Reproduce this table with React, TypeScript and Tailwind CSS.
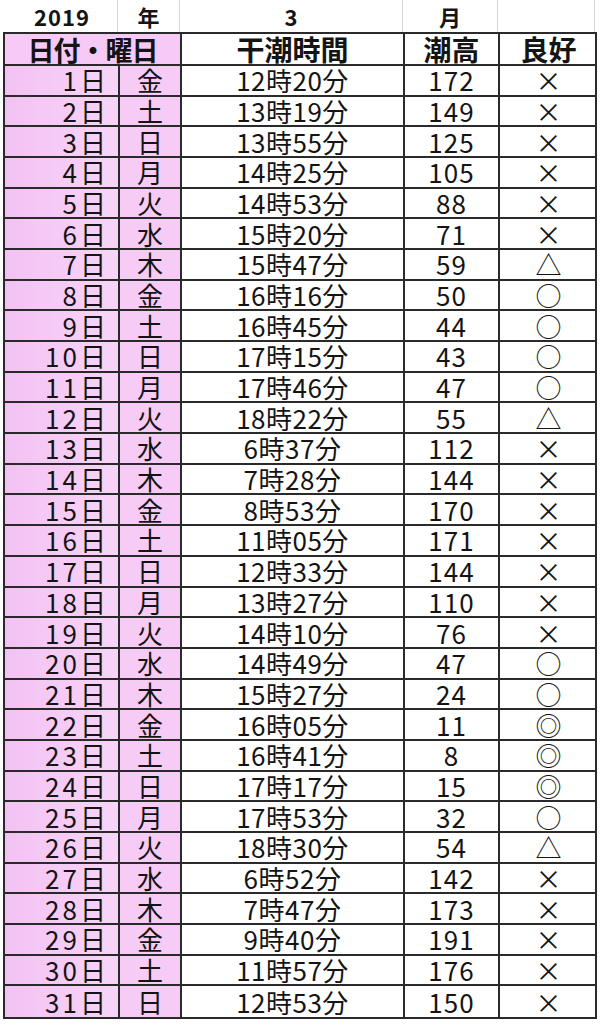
import React from "react";

type Mark = "×" | "△" | "○" | "◎";

interface Tide {
  day: number;
  wd: string;
  time: string;
  height: number;
  mark: Mark;
}

const rows: [string, string, number, Mark][] = [
  ["金", "12時20分", 172, "×"],
  ["土", "13時19分", 149, "×"],
  ["日", "13時55分", 125, "×"],
  ["月", "14時25分", 105, "×"],
  ["火", "14時53分", 88, "×"],
  ["水", "15時20分", 71, "×"],
  ["木", "15時47分", 59, "△"],
  ["金", "16時16分", 50, "○"],
  ["土", "16時45分", 44, "○"],
  ["日", "17時15分", 43, "○"],
  ["月", "17時46分", 47, "○"],
  ["火", "18時22分", 55, "△"],
  ["水", "6時37分", 112, "×"],
  ["木", "7時28分", 144, "×"],
  ["金", "8時53分", 170, "×"],
  ["土", "11時05分", 171, "×"],
  ["日", "12時33分", 144, "×"],
  ["月", "13時27分", 110, "×"],
  ["火", "14時10分", 76, "×"],
  ["水", "14時49分", 47, "○"],
  ["木", "15時27分", 24, "○"],
  ["金", "16時05分", 11, "◎"],
  ["土", "16時41分", 8, "◎"],
  ["日", "17時17分", 15, "◎"],
  ["月", "17時53分", 32, "○"],
  ["火", "18時30分", 54, "△"],
  ["水", "6時52分", 142, "×"],
  ["木", "7時47分", 173, "×"],
  ["金", "9時40分", 191, "×"],
  ["土", "11時57分", 176, "×"],
  ["日", "12時53分", 150, "×"],
];

const tides: Tide[] = rows.map(([wd, time, height, mark], i) => ({
  day: i + 1,
  wd,
  time,
  height,
  mark,
}));

const font = {
  fontFamily: '"Noto Sans CJK JP", "Noto Sans", sans-serif',
};

const cols = "grid-cols-[115px_62px_223px_95px_97px]";

export default function App() {
  return (
    <div className="w-[604px] h-[1024px] bg-white text-[#141414] overflow-hidden" style={font}>
      <div className="ml-[3px] w-[596px]">
        {/* year / month row, plain sheet gridlines */}
        <div className={`grid ${cols} h-[32px] text-[22px] font-bold leading-none`}>
          <div className="flex items-center justify-center border-r border-[#d6d6d6] pl-1 tracking-[1px]">2019</div>
          <div className="flex items-center justify-center border-r border-[#d6d6d6]">年</div>
          <div className="flex items-center justify-center border-r border-[#d6d6d6]">3</div>
          <div className="flex items-center justify-center border-r border-[#d6d6d6]">月</div>
          <div className="border-r border-[#d6d6d6]" />
        </div>

        <div
          className={`grid ${cols} grid-rows-[32px_repeat(31,1fr)] h-[987px] w-[594px] border-2 border-[#2a2a2a] box-border`}
        >
          <div className="col-span-2 flex items-center justify-center bg-[#f6c9f6] border-r-2 border-b-2 border-[#2a2a2a] text-[27px] font-bold leading-none tracking-[-1px]">
            日付・曜日
          </div>
          <div className="flex items-center justify-center border-r-2 border-b-2 border-[#2a2a2a] text-[28px] font-bold leading-none">
            干潮時間
          </div>
          <div className="flex items-center justify-center border-r-2 border-b-2 border-[#2a2a2a] text-[28px] font-bold leading-none">
            潮高
          </div>
          <div className="flex items-center justify-center border-b-2 border-[#2a2a2a] text-[28px] font-bold leading-none">
            良好
          </div>

          {tides.map((t, i) => {
            const last = i === tides.length - 1;
            const b = last ? "" : "border-b-2";
            return (
              <React.Fragment key={t.day}>
                <div
                  className={`flex items-center justify-end pr-[12px] bg-gradient-to-r from-[#f3c2f3] to-[#f8d4f8] border-r-2 border-[#2a2a2a] ${b} text-[26px] leading-none`}
                >
                  <span className="tracking-[3px]">{t.day}</span>
                  <span>日</span>
                </div>
                <div
                  className={`flex items-center justify-center bg-[#f6cbf6] border-r-2 border-[#2a2a2a] ${b} text-[26px] leading-none`}
                >
                  {t.wd}
                </div>
                <div
                  className={`flex items-center justify-center border-r-2 border-[#2a2a2a] ${b} text-[26px] leading-none tracking-[0.5px]`}
                >
                  {t.time}
                </div>
                <div
                  className={`flex items-center justify-center border-r-2 border-[#2a2a2a] ${b} text-[26px] leading-none tracking-[1px]`}
                >
                  {t.height}
                </div>
                <div className={`flex items-center justify-center border-[#2a2a2a] ${b} text-[26px] leading-none`}>
                  {t.mark}
                </div>
              </React.Fragment>
            );
          })}
        </div>
      </div>
    </div>
  );
}
